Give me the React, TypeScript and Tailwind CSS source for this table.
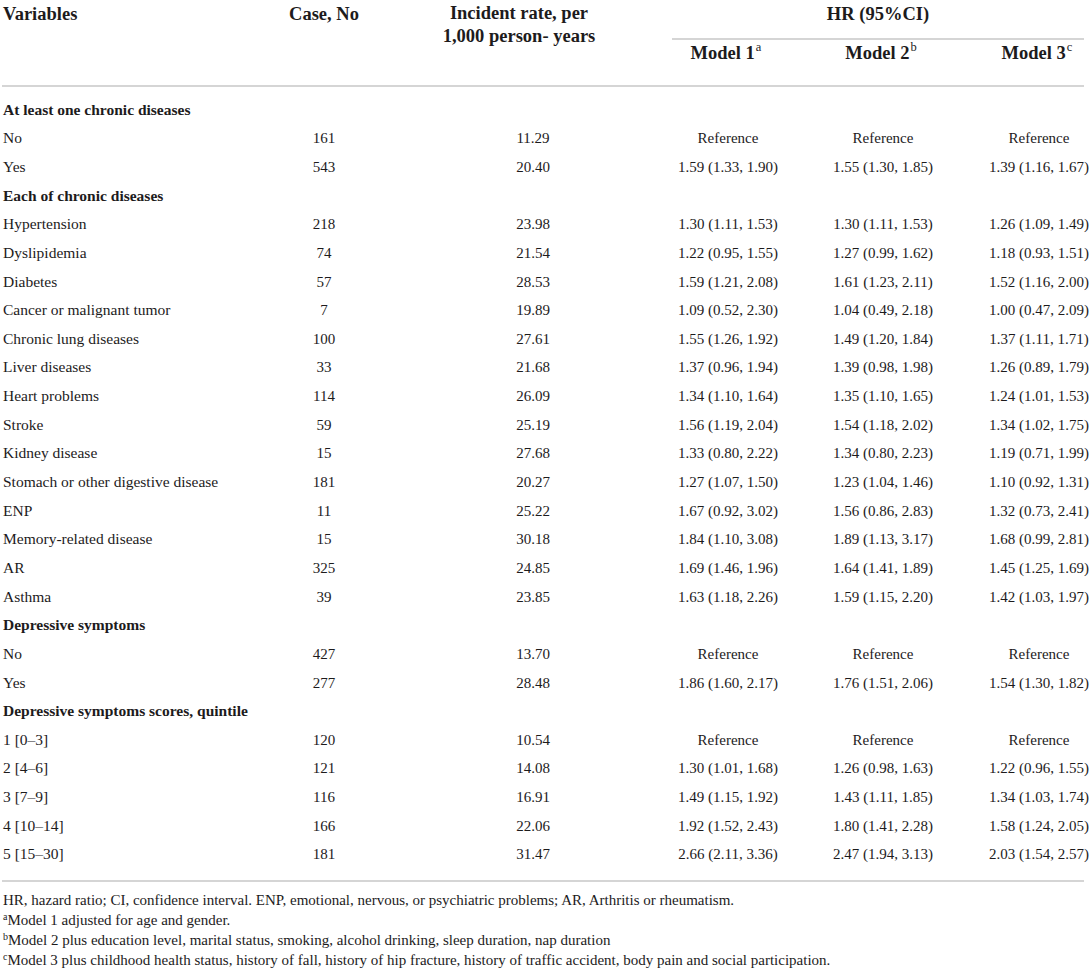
import React from 'react';

type Row =
  | { kind: 'section'; label: string }
  | { kind: 'data'; label: string; cases: string; rate: string; m1: string; m2: string; m3: string };

const rows: Row[] = [
  { kind: 'section', label: 'At least one chronic diseases' },
  { kind: 'data', label: 'No', cases: '161', rate: '11.29', m1: 'Reference', m2: 'Reference', m3: 'Reference' },
  { kind: 'data', label: 'Yes', cases: '543', rate: '20.40', m1: '1.59 (1.33, 1.90)', m2: '1.55 (1.30, 1.85)', m3: '1.39 (1.16, 1.67)' },
  { kind: 'section', label: 'Each of chronic diseases' },
  { kind: 'data', label: 'Hypertension', cases: '218', rate: '23.98', m1: '1.30 (1.11, 1.53)', m2: '1.30 (1.11, 1.53)', m3: '1.26 (1.09, 1.49)' },
  { kind: 'data', label: 'Dyslipidemia', cases: '74', rate: '21.54', m1: '1.22 (0.95, 1.55)', m2: '1.27 (0.99, 1.62)', m3: '1.18 (0.93, 1.51)' },
  { kind: 'data', label: 'Diabetes', cases: '57', rate: '28.53', m1: '1.59 (1.21, 2.08)', m2: '1.61 (1.23, 2.11)', m3: '1.52 (1.16, 2.00)' },
  { kind: 'data', label: 'Cancer or malignant tumor', cases: '7', rate: '19.89', m1: '1.09 (0.52, 2.30)', m2: '1.04 (0.49, 2.18)', m3: '1.00 (0.47, 2.09)' },
  { kind: 'data', label: 'Chronic lung diseases', cases: '100', rate: '27.61', m1: '1.55 (1.26, 1.92)', m2: '1.49 (1.20, 1.84)', m3: '1.37 (1.11, 1.71)' },
  { kind: 'data', label: 'Liver diseases', cases: '33', rate: '21.68', m1: '1.37 (0.96, 1.94)', m2: '1.39 (0.98, 1.98)', m3: '1.26 (0.89, 1.79)' },
  { kind: 'data', label: 'Heart problems', cases: '114', rate: '26.09', m1: '1.34 (1.10, 1.64)', m2: '1.35 (1.10, 1.65)', m3: '1.24 (1.01, 1.53)' },
  { kind: 'data', label: 'Stroke', cases: '59', rate: '25.19', m1: '1.56 (1.19, 2.04)', m2: '1.54 (1.18, 2.02)', m3: '1.34 (1.02, 1.75)' },
  { kind: 'data', label: 'Kidney disease', cases: '15', rate: '27.68', m1: '1.33 (0.80, 2.22)', m2: '1.34 (0.80, 2.23)', m3: '1.19 (0.71, 1.99)' },
  { kind: 'data', label: 'Stomach or other digestive disease', cases: '181', rate: '20.27', m1: '1.27 (1.07, 1.50)', m2: '1.23 (1.04, 1.46)', m3: '1.10 (0.92, 1.31)' },
  { kind: 'data', label: 'ENP', cases: '11', rate: '25.22', m1: '1.67 (0.92, 3.02)', m2: '1.56 (0.86, 2.83)', m3: '1.32 (0.73, 2.41)' },
  { kind: 'data', label: 'Memory-related disease', cases: '15', rate: '30.18', m1: '1.84 (1.10, 3.08)', m2: '1.89 (1.13, 3.17)', m3: '1.68 (0.99, 2.81)' },
  { kind: 'data', label: 'AR', cases: '325', rate: '24.85', m1: '1.69 (1.46, 1.96)', m2: '1.64 (1.41, 1.89)', m3: '1.45 (1.25, 1.69)' },
  { kind: 'data', label: 'Asthma', cases: '39', rate: '23.85', m1: '1.63 (1.18, 2.26)', m2: '1.59 (1.15, 2.20)', m3: '1.42 (1.03, 1.97)' },
  { kind: 'section', label: 'Depressive symptoms' },
  { kind: 'data', label: 'No', cases: '427', rate: '13.70', m1: 'Reference', m2: 'Reference', m3: 'Reference' },
  { kind: 'data', label: 'Yes', cases: '277', rate: '28.48', m1: '1.86 (1.60, 2.17)', m2: '1.76 (1.51, 2.06)', m3: '1.54 (1.30, 1.82)' },
  { kind: 'section', label: 'Depressive symptoms scores, quintile' },
  { kind: 'data', label: '1 [0–3]', cases: '120', rate: '10.54', m1: 'Reference', m2: 'Reference', m3: 'Reference' },
  { kind: 'data', label: '2 [4–6]', cases: '121', rate: '14.08', m1: '1.30 (1.01, 1.68)', m2: '1.26 (0.98, 1.63)', m3: '1.22 (0.96, 1.55)' },
  { kind: 'data', label: '3 [7–9]', cases: '116', rate: '16.91', m1: '1.49 (1.15, 1.92)', m2: '1.43 (1.11, 1.85)', m3: '1.34 (1.03, 1.74)' },
  { kind: 'data', label: '4 [10–14]', cases: '166', rate: '22.06', m1: '1.92 (1.52, 2.43)', m2: '1.80 (1.41, 2.28)', m3: '1.58 (1.24, 2.05)' },
  { kind: 'data', label: '5 [15–30]', cases: '181', rate: '31.47', m1: '2.66 (2.11, 3.36)', m2: '2.47 (1.94, 3.13)', m3: '2.03 (1.54, 2.57)' },
];

const cols = 'grid grid-cols-[248px_148px_270px_120px_190px_106px]';

// centred cell, overflows evenly on both sides
const Cell = ({ children, className = '' }: { children: React.ReactNode; className?: string }) => (
  <div className={`flex justify-center whitespace-nowrap ${className}`}>
    <span>{children}</span>
  </div>
);

const Rule = () => <div className="h-[2px] bg-[#d5d5d5]" />;

const Sup = ({ children }: { children: React.ReactNode }) => (
  <sup className="-top-[8px] ml-px text-[12.5px] font-normal">{children}</sup>
);

const App = () => {
  return (
    <div className="min-h-screen bg-white text-[#1d1b1c] font-['Liberation_Serif',serif]">
      <div className="ml-[2px] w-[1082px]">
        {/* header */}
        <div className={`${cols} h-[85px] text-[18.5px] font-bold`}>
          <div className="pl-px pt-[2px] leading-[24px]">Variables</div>
          <Cell className="pt-[2px] leading-[24px]">Case, No</Cell>
          <div className="flex justify-center pr-[28px] pt-[2px] text-center leading-[23px]">
            <div>
              Incident rate, per
              <br />
              1,000 person- years
            </div>
          </div>
          <div className="col-span-3 flex flex-col">
            <div className="h-[38px] pl-[4px] pt-[2px] text-center leading-[24px]">HR (95%CI)</div>
            <div className="ml-[4px]">
              <Rule />
            </div>
            <div className="grid grid-cols-[120px_190px_106px] pt-px leading-[24px]">
              <Cell className="-ml-[4px]">
                Model 1<Sup>a</Sup>
              </Cell>
              <Cell className="-ml-[4px]">
                Model 2<Sup>b</Sup>
              </Cell>
              <Cell className="pl-[12px]">
                Model 3<Sup>c</Sup>
              </Cell>
            </div>
          </div>
        </div>
        <Rule />

        {/* body */}
        <div className="pt-[8.7px] pb-[10.7px] text-[15px]">
          {rows.map((r, i) =>
            r.kind === 'section' ? (
              <div key={i} className="h-[28.65px] pl-px text-[15.5px] font-bold leading-[28.65px]">
                {r.label}
              </div>
            ) : (
              <div key={i} className={`${cols} h-[28.65px] items-center leading-[28.65px]`}>
                <div className="pl-px text-[15.5px] whitespace-nowrap">{r.label}</div>
                <Cell>{r.cases}</Cell>
                <Cell>{r.rate}</Cell>
                <Cell>{r.m1}</Cell>
                <Cell>{r.m2}</Cell>
                <Cell className="pl-[16px]">{r.m3}</Cell>
              </div>
            )
          )}
        </div>
        <Rule />

        {/* footnotes */}
        <div className="pt-[8px] pl-px text-[15px] leading-[20px]">
          <p>HR, hazard ratio; CI, confidence interval. ENP, emotional, nervous, or psychiatric problems; AR, Arthritis or rheumatism.</p>
          <p>
            <sup className="text-[10px]">a</sup>Model 1 adjusted for age and gender.
          </p>
          <p>
            <sup className="text-[10px]">b</sup>Model 2 plus education level, marital status, smoking, alcohol drinking, sleep duration, nap duration
          </p>
          <p>
            <sup className="text-[10px]">c</sup>Model 3 plus childhood health status, history of fall, history of hip fracture, history of traffic accident, body pain and social participation.
          </p>
        </div>
      </div>
    </div>
  );
};

export default App;
